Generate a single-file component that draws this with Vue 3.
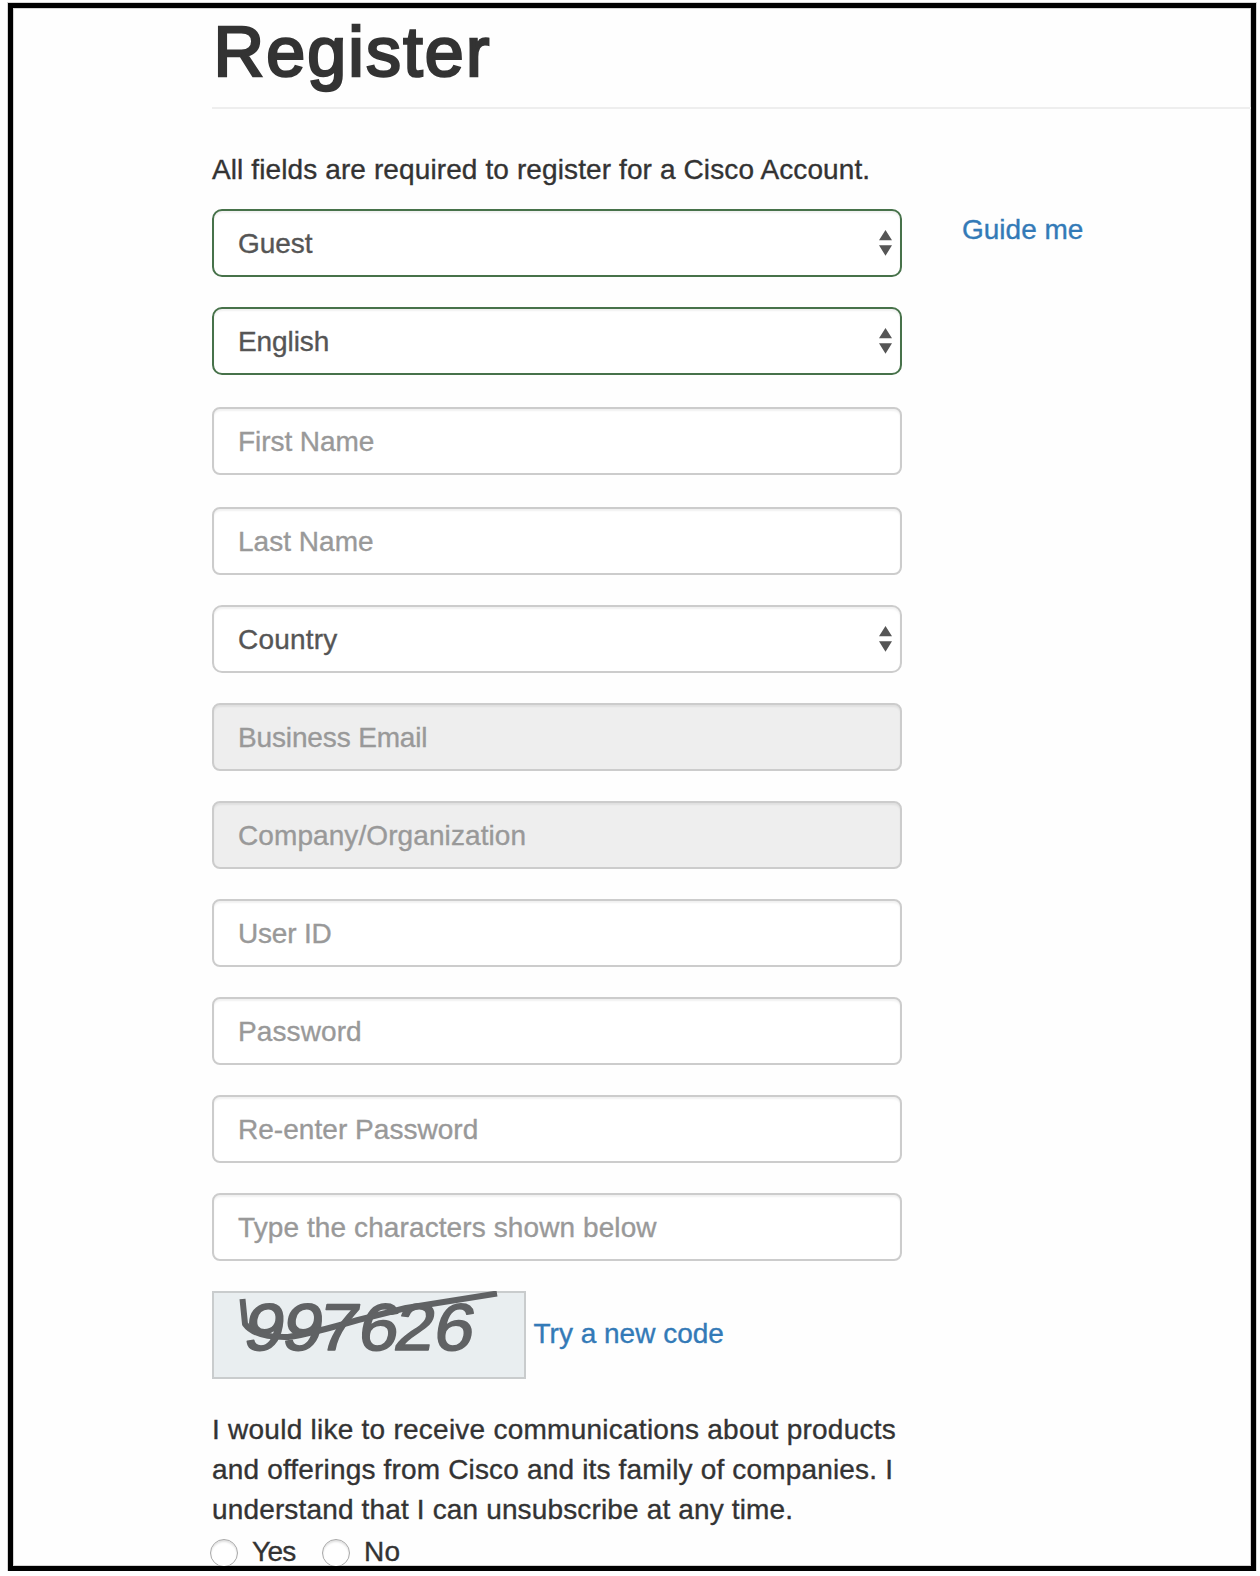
<script setup>
import { ref } from 'vue'

const fields = [
  { label: 'Guest', kind: 'select', state: 'valid', gap: 0, spacing: -0.05 },
  { label: 'English', kind: 'select', state: 'valid', gap: 30, spacing: -0.1 },
  { label: 'First Name', kind: 'input', gap: 32, spacing: -0.06 },
  { label: 'Last Name', kind: 'input', gap: 32, spacing: 0.02 },
  { label: 'Country', kind: 'select', gap: 30, spacing: 0.2 },
  { label: 'Business Email', kind: 'input', state: 'disabled', gap: 30, spacing: -0.14 },
  { label: 'Company/Organization', kind: 'input', state: 'disabled', gap: 30, spacing: 0.09 },
  { label: 'User ID', kind: 'input', gap: 30, spacing: -0.2 },
  { label: 'Password', kind: 'input', gap: 30, spacing: 0.1 },
  { label: 'Re-enter Password', kind: 'input', gap: 30, spacing: 0.04 },
  { label: 'Type the characters shown below', kind: 'input', gap: 30, spacing: 0.1 },
]

const digits = [
  { d: '9', x: 29.5 }, { d: '9', x: 68 }, { d: '7', x: 103.5 },
  { d: '6', x: 144 }, { d: '2', x: 180 }, { d: '6', x: 219.5 },
]

const choice = ref('')
</script>

<template>
  <main class="frame">
    <h1 class="title">Register</h1>
    <p class="intro">All fields are required to register for a Cisco Account.</p>
    <div class="body">
      <form class="form" @submit.prevent>
        <div
          v-for="f in fields"
          :key="f.label"
          class="field"
          :class="[f.kind, f.state]"
          :style="{ marginTop: f.gap + 'px', letterSpacing: f.spacing + 'px' }"
        >
          <span>{{ f.label }}</span>
          <svg v-if="f.kind === 'select'" class="arrows" width="13" height="26" viewBox="0 0 13 26">
            <path d="M6.5 0L13 10.3H0zM0 15.3H13L6.5 25.8z" fill="#555" />
          </svg>
        </div>

        <div class="captcha-row">
          <svg class="captcha" width="314" height="88" viewBox="0 0 314 88">
            <g v-for="(g, i) in digits" :key="i" :transform="`translate(${g.x} 59) skewX(-10) scale(1.08 1)`">
              <text class="digit">{{ g.d }}</text>
            </g>
            <path
              d="M30.5 8L33 33C40 43 54 46.5 76 46C98 43 122 36 146 29L194 17L285 2.5"
              fill="none" stroke="#606264" stroke-width="6" stroke-linejoin="round"
            />
          </svg>
          <a class="link new-code">Try a new code</a>
        </div>

        <p class="consent">
          <span class="line l1">I would like to receive communications about products</span>
          <span class="line l2">and offerings from Cisco and its family of companies. I</span>
          <span class="line l3">understand that I can unsubscribe at any time.</span>
        </p>
        <div class="choices">
          <label class="choice"><input v-model="choice" type="radio" value="yes" /><span>Yes</span></label>
          <label class="choice no"><input v-model="choice" type="radio" value="no" /><span>No</span></label>
        </div>
      </form>
      <a class="link guide">Guide me</a>
    </div>
  </main>
</template>

<style>
body {
  background: #fefefe;
}
</style>

<style scoped>
.frame {
  box-sizing: border-box;
  width: 1248px;
  height: 1568px;
  margin: 3px 0 0 8px;
  padding-left: 199px;
  border: 5px solid #000;
  box-shadow: 0 0 0 1px #d4d4d4, inset 0 0 0 1px #d4d4d4;
  background: #fefefe;
  overflow: hidden;
  color: #333;
  font: 28px/40px "Liberation Sans", Arial, sans-serif;
  -webkit-text-stroke: 0.35px currentColor;
}
.title {
  margin: 0;
  padding: 4px 0 15px 1.5px;
  border-bottom: 2px solid #eee;
  font-size: 70px;
  line-height: 80px;
  font-weight: 400;
  letter-spacing: 2.15px;
  -webkit-text-stroke: 2.6px #333;
}
.intro {
  margin: 41px 0 19px;
  letter-spacing: 0.11px;
}
.body {
  display: flex;
  align-items: flex-start;
}
.form {
  width: 690px;
}
.field {
  box-sizing: border-box;
  display: flex;
  align-items: center;
  justify-content: space-between;
  height: 68px;
  padding: 1px 8px 0 24px;
  border: 2px solid #ccc;
  border-radius: 8px;
  background: #fff;
  box-shadow: inset 0 2px 2px rgba(0, 0, 0, 0.06);
  color: #999;
  white-space: nowrap;
}
.select {
  border-radius: 10px;
  color: #555;
}
.valid {
  border-color: #47724a;
}
.disabled {
  background: #eee;
}
.arrows {
  margin-top: -1px;
}
.captcha-row {
  display: flex;
  align-items: center;
  margin-top: 30px;
}
.captcha {
  background: #e9eef0;
  box-shadow: inset 0 0 0 2px #c9cccd;
}
.digit {
  font: 66px "Liberation Sans", Arial, sans-serif;
  fill: #606264;
  stroke: #606264;
  stroke-width: 1.6px;
  stroke-linejoin: round;
}
.link {
  color: #337ab7;
  white-space: nowrap;
}
.new-code {
  margin: -3px 0 0 7.5px;
}
.guide {
  margin: 1px 0 0 60px;
}
.consent {
  margin: 31px 0 0;
}
.line {
  display: block;
  white-space: nowrap;
}
.l1 {
  letter-spacing: 0.25px;
}
.l2 {
  letter-spacing: 0.17px;
}
.l3 {
  letter-spacing: 0.15px;
}
.choices {
  display: flex;
  margin: 9px 0 0 -2px;
}
.choice {
  display: flex;
  line-height: 28px;
}
.choice span {
  margin: -1px 0 0 14px;
  letter-spacing: -0.7px;
}
.choice.no {
  margin-left: 26.5px;
}
.choice.no span {
  margin-left: 14px;
  letter-spacing: 0.3px;
}
.choice input {
  appearance: none;
  box-sizing: border-box;
  width: 28px;
  height: 28px;
  margin: 0;
  border: 1px solid #a9a9a9;
  border-radius: 50%;
  background: #fff;
  box-shadow: inset 0 2px 2px rgba(0, 0, 0, 0.12);
}
</style>
